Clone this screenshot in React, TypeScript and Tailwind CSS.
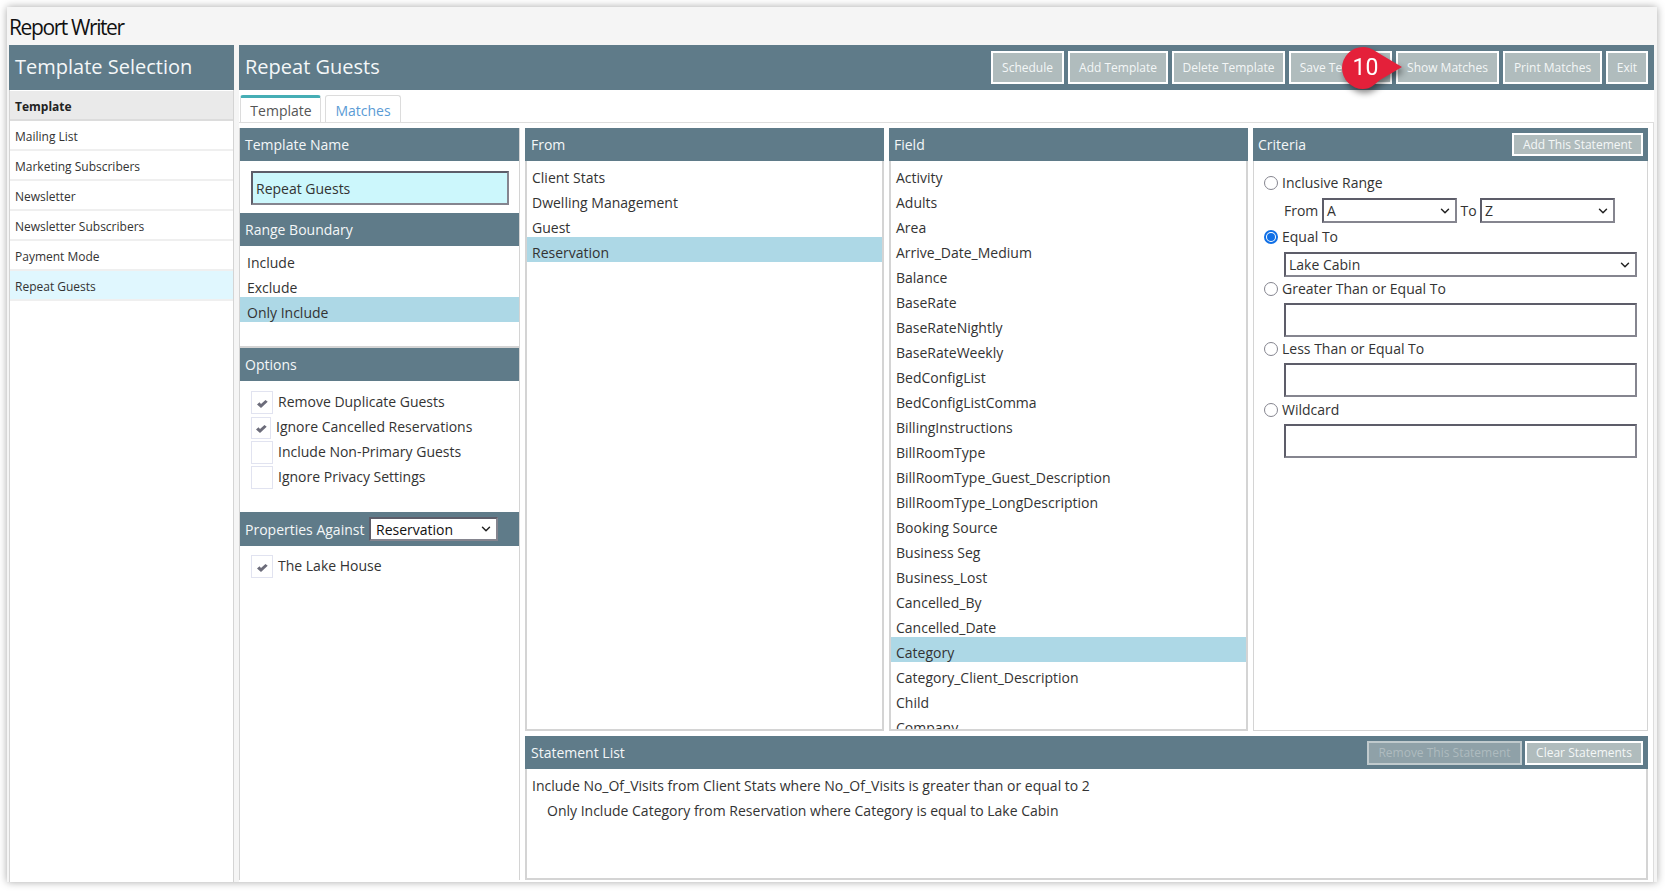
import { ChevronDown } from "lucide-react";

const templates = ["Mailing List", "Marketing Subscribers", "Newsletter", "Newsletter Subscribers", "Payment Mode"];
const fields = [
  "Activity", "Adults", "Area", "Arrive_Date_Medium", "Balance", "BaseRate", "BaseRateNightly", "BaseRateWeekly",
  "BedConfigList", "BedConfigListComma", "BillingInstructions", "BillRoomType", "BillRoomType_Guest_Description",
  "BillRoomType_LongDescription", "Booking Source", "Business Seg", "Business_Lost", "Cancelled_By", "Cancelled_Date",
  "Category", "Category_Client_Description", "Child", "Company",
];
const fromItems = ["Client Stats", "Dwelling Management", "Guest", "Reservation"];
const topButtons = [
  { label: "Schedule", w: "w-[73px]" },
  { label: "Add Template", w: "w-[100px]" },
  { label: "Delete Template", w: "w-[113px]" },
  { label: "Save Template", w: "w-[103px]" },
  { label: "Show Matches", w: "w-[103px]" },
  { label: "Print Matches", w: "w-[99px]" },
  { label: "Exit", w: "w-[42px]" },
];

const insetBorder = "border-2 border-t-[#5d5d69] border-l-[#5d5d69] border-r-[#85858f] border-b-[#85858f]";

const PanelHeader = ({ title, pad = "pl-[5px]", children }: { title: string; pad?: string; children?: React.ReactNode }) => (
  <div className={`flex h-[33px] shrink-0 items-center justify-between bg-[#5f7b89] pr-[5px] text-[14px] text-[#f4f7f8] ${pad}`}>
    <span>{title}</span>
    {children}
  </div>
);

const ListRow = ({ label, selected, pad = "pl-[5px]" }: { label: string; selected?: boolean; pad?: string }) => (
  <div className={`h-[25px] shrink-0 pt-[3px] text-[14px] leading-[25px] text-[#333] ${pad} ${selected ? "bg-[#add8e6]" : ""}`}>
    {label}
  </div>
);

const Check = ({ on, size, label }: { on?: boolean; size: string; label: string }) => (
  <div className="flex h-[25px] items-center">
    <div className={`mt-[2px] flex shrink-0 items-center justify-center border border-[#e1e3f0] pt-[2px] ${size}`}>
      {on && (
        <svg width="11" height="8" viewBox="0 0 11 8">
          <path d="M0 4.5 L2.5 2.3 L4 4 L8.5 0 L10.7 1.8 L4 8 Z" fill="#6c6c7a" />
        </svg>
      )}
    </div>
    <span className="pl-[5px] text-[14px] text-[#333]">{label}</span>
  </div>
);

const Radio = ({ on, label }: { on?: boolean; label: string }) => (
  <div className="flex items-center">
    {on ? (
      <div className="flex h-[14px] w-[14px] shrink-0 items-center justify-center rounded-full border-2 border-[#0f6fe6] bg-white">
        <div className="h-[8px] w-[8px] rounded-full bg-[#0f6fe6]" />
      </div>
    ) : (
      <div className="h-[14px] w-[14px] shrink-0 rounded-full border border-[#85858f] bg-white" />
    )}
    <span className="pl-[4px] text-[14px] leading-[20px] text-[#333]">{label}</span>
  </div>
);

const FakeSelect = ({ value, className, pad = "pl-[3px]" }: { value: string; className: string; pad?: string }) => (
  <div className={`flex items-center justify-between bg-white pr-[3px] text-[14px] ${pad} ${insetBorder} ${className}`}>
    <span>{value}</span>
    <ChevronDown size={14} strokeWidth={2.5} className="text-[#222]" />
  </div>
);

const SmallButton = ({ label, className }: { label: string; className: string }) => (
  <div className={`flex items-center justify-center border-2 text-[12px] ${className}`}>{label}</div>
);

export default function App() {
  return (
    <div className="h-[891px] w-[1665px] overflow-hidden bg-white pl-[7px] pt-[7px] font-['Open_Sans',sans-serif]">
      <div className="flex h-[875px] w-[1650px] flex-col bg-[#f5f5f5] pl-[2px] pr-[3px] shadow-[0_0_8px_rgba(0,0,0,0.35)]">
        <div className="flex h-[38px] shrink-0 items-end pb-[3px] text-[21px] leading-[30px] tracking-[-1.4px] text-[#111]">
          Report Writer
        </div>
        <div className="flex min-h-0 flex-1 gap-[5px]">
          {/* left sidebar */}
          <div className="flex w-[225px] shrink-0 flex-col">
            <div className="flex h-[45px] shrink-0 items-center bg-[#5f7b89] pb-[2px] pl-[6px] text-[20px] text-[#f4f7f8]">
              Template Selection
            </div>
            <div className="flex-1 border-x border-[#d4d4d4] bg-white pt-px text-[12px] text-[#333]">
              <div className="flex h-[30px] items-center border-b-2 border-[#dcdcdc] bg-[#eaeaea] pl-[5px] pt-[3px] font-bold text-[#222]">
                Template
              </div>
              {templates.map((t) => (
                <div key={t} className="flex h-[30px] items-center border-b-2 border-[#efefef] pl-[5px] pt-[3px]">
                  {t}
                </div>
              ))}
              <div className="flex h-[30px] items-center border-b-2 border-[#efefef] bg-[#e0f7fe] pl-[5px] pt-[3px]">
                Repeat Guests
              </div>
            </div>
          </div>

          {/* main */}
          <div className="flex min-w-0 flex-1 flex-col bg-white">
            <div className="flex h-[45px] shrink-0 items-center justify-between bg-[#5f7b89] pl-[6px] pr-[6px]">
              <span className="pb-[2px] text-[20px] text-[#f4f7f8]">Repeat Guests</span>
              <div className="flex h-[33px] gap-[4px]">
                {topButtons.map((b) => (
                  <SmallButton key={b.label} label={b.label} className={`${b.w} border-white bg-[#b0bcbd] text-[#f4f7f7]`} />
                ))}
              </div>
            </div>

            <div className="flex h-[32px] shrink-0 items-end gap-[4px] pl-px">
              <div className="flex h-[27px] w-[81px] items-center justify-center rounded-t-[3px] border-x border-t-[3px] border-x-[#dcdcdc] border-t-[#46aeb5] bg-white pl-px pt-px text-[14px] text-[#555]">
                Template
              </div>
              <div className="flex h-[27px] w-[76px] items-center justify-center rounded-t-[3px] border-x border-t border-[#dcdcdc] bg-white pt-[2px] text-[14px] text-[#5a9bd5]">
                Matches
              </div>
            </div>

            <div className="flex min-h-0 flex-1 gap-[5px] border-r border-t border-[#dddddd] pb-[2px] pr-[5px] pt-[5px]">
              {/* left column */}
              <div className="flex w-[281px] shrink-0 flex-col border-x border-[#d4d4d4]">
                <PanelHeader title="Template Name" />
                <div className="flex h-[52px] shrink-0 items-start pl-[11px] pr-[10px] pt-[10px]">
                  <div className={`flex h-[34px] w-full items-center bg-[#ccf7fc] pl-[3px] text-[14px] text-[#333] ${insetBorder}`}>
                    Repeat Guests
                  </div>
                </div>
                <PanelHeader title="Range Boundary" />
                <div className="flex h-[102px] shrink-0 flex-col border-b-2 border-[#d4d4d4] pt-px">
                  <ListRow label="Include" pad="pl-[7px]" />
                  <ListRow label="Exclude" pad="pl-[7px]" />
                  <ListRow label="Only Include" pad="pl-[7px]" selected />
                </div>
                <PanelHeader title="Options" />
                <div className="flex h-[131px] shrink-0 flex-col pl-[11px] pt-[8px]">
                  <Check on size="h-[23px] w-[22px]" label="Remove Duplicate Guests" />
                  <Check on size="h-[22px] w-[20px]" label="Ignore Cancelled Reservations" />
                  <Check size="h-[23px] w-[22px]" label="Include Non-Primary Guests" />
                  <Check size="h-[23px] w-[22px]" label="Ignore Privacy Settings" />
                </div>
                <div className="flex h-[34px] shrink-0 items-center bg-[#5f7b89] pl-[5px] text-[14px] text-[#f4f7f8]">
                  <span className="w-[124px]">Properties Against</span>
                  <FakeSelect value="Reservation" pad="pl-[5px]" className="h-[24px] w-[129px] text-[#111]" />
                </div>
                <div className="pl-[11px] pt-[7px]">
                  <Check on size="h-[23px] w-[22px]" label="The Lake House" />
                </div>
              </div>

              {/* right column */}
              <div className="flex min-w-0 flex-1 flex-col gap-[5px]">
                <div className="flex h-[603px] shrink-0">
                  <div className="flex w-[359px] shrink-0 flex-col">
                    <PanelHeader title="From" pad="pl-[6px]" />
                    <div className="flex-1 border-x-2 border-b-2 border-[#d4d4d4] pt-px">
                      {fromItems.map((f) => (
                        <ListRow key={f} label={f} selected={f === "Reservation"} />
                      ))}
                    </div>
                  </div>
                  <div className="ml-[5px] flex w-[359px] shrink-0 flex-col">
                    <PanelHeader title="Field" />
                    <div className="min-h-0 flex-1 overflow-hidden border-x-2 border-b-2 border-[#d4d4d4] pt-px">
                      {fields.map((f) => (
                        <ListRow key={f} label={f} selected={f === "Category"} />
                      ))}
                    </div>
                  </div>
                  <div className="ml-[5px] flex w-[395px] shrink-0 flex-col">
                    <PanelHeader title="Criteria">
                      <SmallButton label="Add This Statement" className="h-[23px] w-[131px] border-white bg-[#b0bcbd] text-[#f4f7f7]" />
                    </PanelHeader>
                    <div className="flex flex-1 flex-col border border-t-0 border-[#d4d4d4] pl-[10px] pr-[10px] pt-[12px]">
                      <Radio label="Inclusive Range" />
                      <div className="mt-[5px] flex h-[25px] items-center pl-[20px] text-[14px] text-[#333]">
                        <span className="w-[38px]">From</span>
                        <FakeSelect value="A" className="h-[25px] w-[135px]" />
                        <span className="w-[23px] text-center">To</span>
                        <FakeSelect value="Z" className="h-[25px] w-[135px]" />
                      </div>
                      <div className="mt-[4px]">
                        <Radio on label="Equal To" />
                      </div>
                      <FakeSelect value="Lake Cabin" className="ml-[20px] mt-[5px] h-[25px] shrink-0 text-[#333]" />
                      <div className="mt-[2px]">
                        <Radio label="Greater Than or Equal To" />
                      </div>
                      <div className={`ml-[20px] mt-[4px] h-[34px] shrink-0 ${insetBorder}`} />
                      <div className="mt-[2px]">
                        <Radio label="Less Than or Equal To" />
                      </div>
                      <div className={`ml-[20px] mt-[4px] h-[34px] shrink-0 ${insetBorder}`} />
                      <div className="mt-[3px]">
                        <Radio label="Wildcard" />
                      </div>
                      <div className={`ml-[20px] mt-[4px] h-[34px] shrink-0 ${insetBorder}`} />
                    </div>
                  </div>
                </div>

                <div className="flex min-h-0 flex-1 flex-col">
                  <PanelHeader title="Statement List" pad="pl-[6px]">
                    <div className="flex gap-[3px]">
                      <SmallButton label="Remove This Statement" className="h-[24px] w-[155px] border-[#c0cacd] bg-[#8fa1a8] text-[#aebbbf]" />
                      <SmallButton label="Clear Statements" className="h-[24px] w-[118px] border-white bg-[#b0bcbd] text-[#f4f7f7]" />
                    </div>
                  </PanelHeader>
                  <div className="flex-1 border-x-2 border-b-2 border-[#d4d4d4] pt-px">
                    <ListRow label="Include No_Of_Visits from Client Stats where No_Of_Visits is greater than or equal to 2" />
                    <div className="pl-[15px]">
                      <ListRow label="Only Include Category from Reservation where Category is equal to Lake Cabin" />
                    </div>
                  </div>
                </div>
              </div>
            </div>
          </div>
        </div>
      </div>

      {/* step marker */}
      <div className="absolute left-[1342px] top-[47px] h-[42px] w-[62px] drop-shadow-[2px_4px_3px_rgba(0,0,0,0.45)]">
        <svg width="62" height="42" viewBox="0 0 62 42" className="absolute left-0 top-0">
          <path d="M21 0 C29 0 33 4 38 7 L60 20 L38 33 C33 37 29 42 21 42 A21 21 0 0 1 21 0 Z" fill="#e4203a" />
        </svg>
        <div className="absolute left-0 top-0 flex h-[42px] w-[47px] items-center justify-center font-['Roboto',sans-serif] text-[23px] text-white">
          10
        </div>
      </div>
    </div>
  );
}
